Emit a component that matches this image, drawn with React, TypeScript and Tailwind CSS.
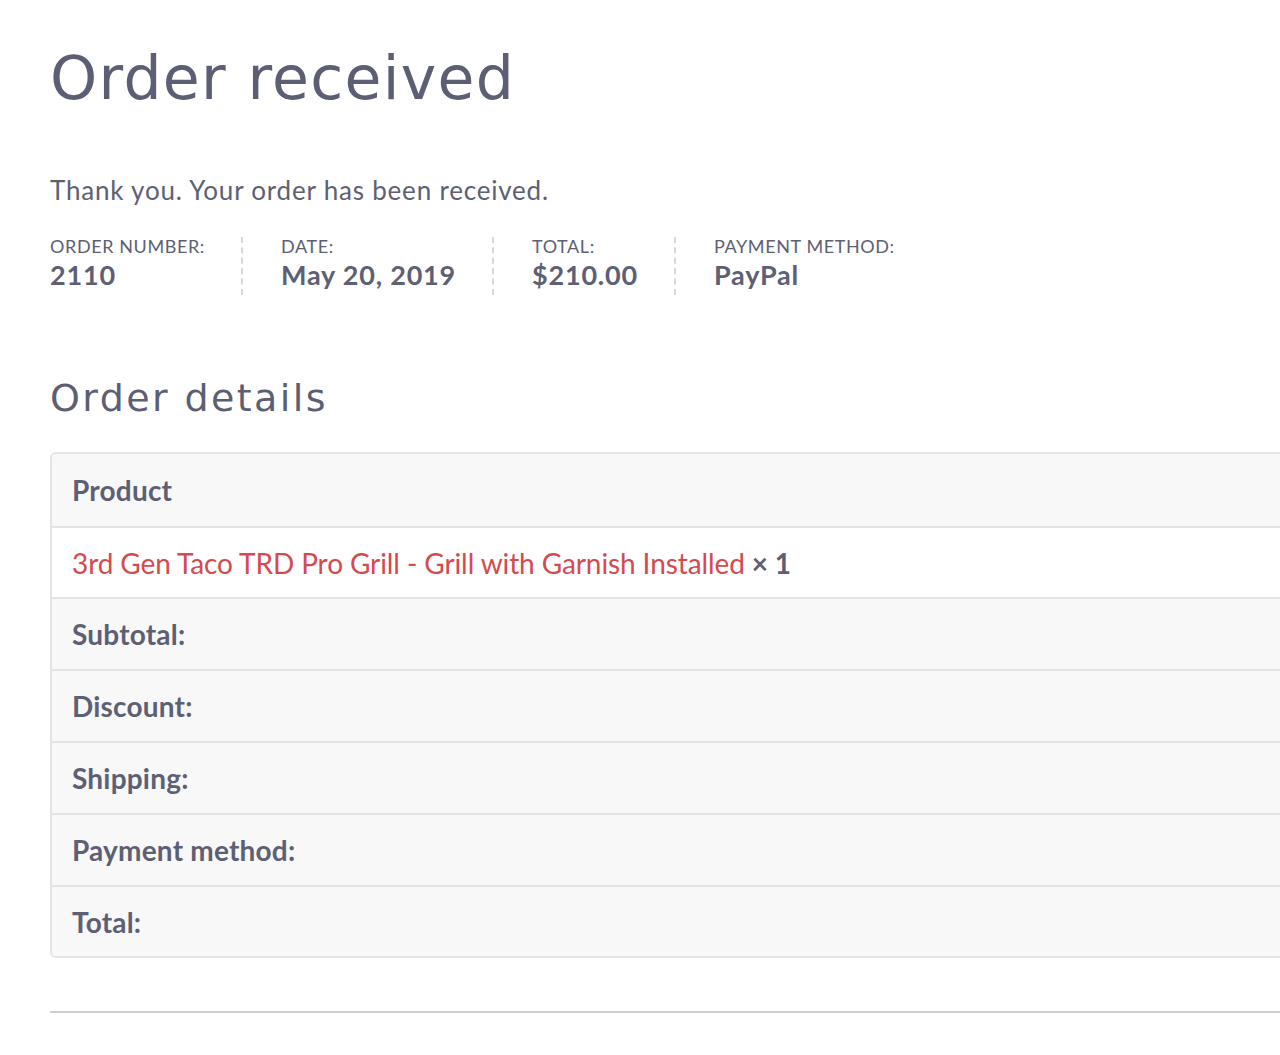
import React from 'react';

const overview = [
    { label: 'Order number:', value: '2110' },
    { label: 'Date:', value: 'May 20, 2019' },
    { label: 'Total:', value: '$210.00' },
    { label: 'Payment method:', value: 'PayPal' },
];

const totals = ['Subtotal:', 'Discount:', 'Shipping:', 'Payment method:', 'Total:'];

export default function App() {
    return (
        <div className="w-[1280px] h-[1055px] overflow-hidden bg-white text-[#5d6075] font-['Lato',sans-serif]">
            <div className="pl-[50px] pt-[44px] w-[1400px]">
                <h1 className="font-['DejaVu_Sans',sans-serif] text-[60px] leading-[68px] tracking-[1.3px] font-normal text-[#5c5f73]">
                    Order received
                </h1>

                <p className="mt-[62px] text-[26px] leading-[32px] tracking-[0.8px]">Thank you. Your order has been received.</p>

                {/* Order overview */}
                <ul className="mt-[31px] flex">
                    {overview.map((item, i) => (
                        <li
                            key={item.label}
                            className={`pr-[36px] mr-[38px] ${i < overview.length - 1 ? 'border-r-2 border-dashed border-[#d8d8d8]' : ''} pb-[3px]`}
                        >
                            <div className="uppercase text-[18px] leading-[18px] tracking-[0.6px] whitespace-nowrap">{item.label}</div>
                            <div className="mt-[3px] font-bold text-[27px] leading-[34px] tracking-[0.8px] whitespace-nowrap">{item.value}</div>
                        </li>
                    ))}
                </ul>

                <h2 className="mt-[79px] font-['DejaVu_Sans',sans-serif] text-[38px] leading-[48px] tracking-[2.4px] font-normal text-[#5c5f73]">
                    Order details
                </h2>

                {/* Order details table */}
                <div className="mt-[30px] border-2 border-[#e4e4e4] rounded-[6px] overflow-hidden">
                    <div className="h-[74px] flex items-center px-[20px] bg-[#f8f8f8] border-b-2 border-[#e4e4e4]">
                        <span className="font-bold text-[28px] tracking-[0.2px]">Product</span>
                    </div>
                    <div className="h-[71px] flex items-center px-[20px] bg-white border-b-2 border-[#e4e4e4]">
                        <span className="text-[28px] tracking-[-0.1px] text-[#d44a4e]">3rd Gen Taco TRD Pro Grill - Grill with Garnish Installed</span>
                        <span className="ml-[7px] font-bold text-[28px]">×&nbsp;1</span>
                    </div>
                    {totals.map((t, i) => (
                        <div
                            key={t}
                            className={`${i < totals.length - 1 ? 'h-[72px] border-b-2 border-[#e4e4e4]' : 'h-[69px]'} flex items-center px-[20px] bg-[#f8f8f8]`}
                        >
                            <span className="font-bold text-[28px] tracking-[0.2px]">{t}</span>
                        </div>
                    ))}
                </div>

                <hr className="mt-[53px] border-0 border-t-2 border-[#d0d0d0]" />
            </div>
        </div>
    );
}
